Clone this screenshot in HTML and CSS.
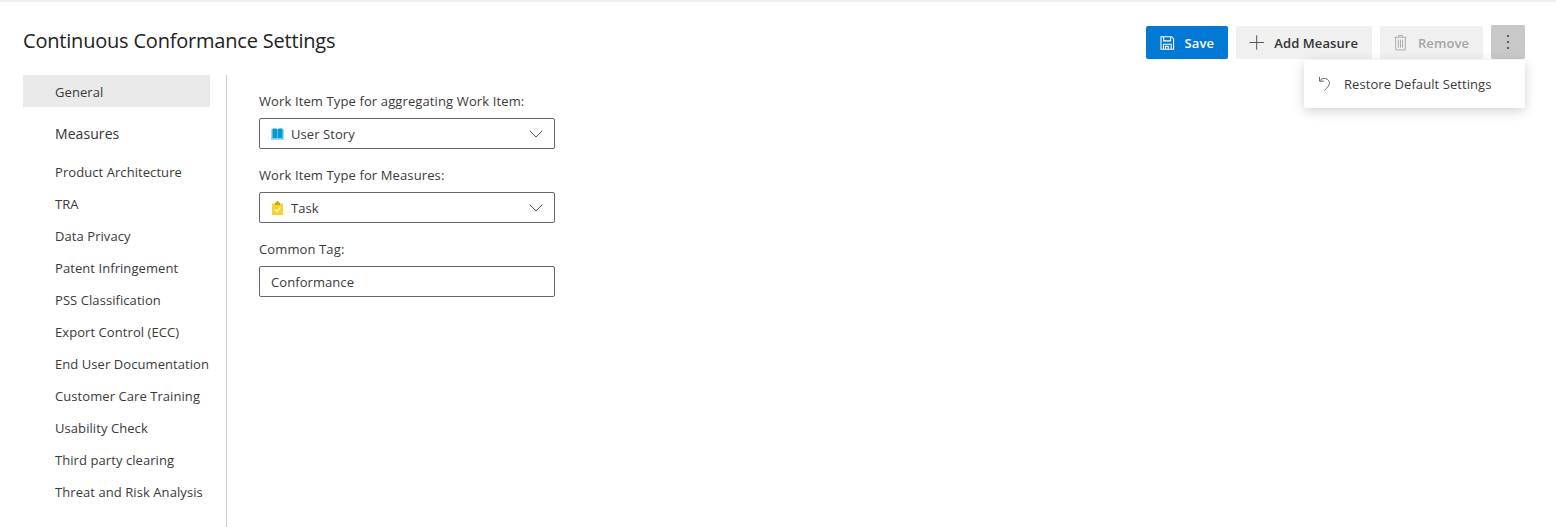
FILE: index.html
```html
<!DOCTYPE html>
<html lang="en">
<head>
<meta charset="utf-8" />
<title>Continuous Conformance Settings</title>
<link rel="stylesheet" href="styles.css">
</head>
<body>
<div id="page">
  <div id="header">
    <h1>Continuous Conformance Settings</h1>
    <div id="toolbar">
      <a class="btn primary">
        <svg width="16" height="16" viewBox="0 0 16 16" fill="none" stroke="#fff" stroke-width="1.2"><path d="M1.1 1.1h11.6l2.2 2.2v11.6H1.1z"/><path d="M4 1.3v4.4h7.6V1.3M3.8 14.700V9.300h8.400v5.400M6 14.700v-3h3v3"/></svg>
        <span>Save</span>
      </a>
      <a class="btn add">
        <svg width="17" height="17" viewBox="0 0 17 17" stroke="#555" stroke-width="1.1"><path d="M8.500 0.500v16M0.500 8.500h16"/></svg>
        <span>Add Measure</span>
      </a>
      <a class="btn disabled">
        <svg width="14" height="17" viewBox="0 0 14 17" fill="none" stroke="#a8a8a8" stroke-width="1"><path d="M0.500 2.800h13M5 2.600V0.800h4v1.800M1.800 2.800v13.700h10.400V2.800M4.800 5.500v8.500M7 5.500v8.500M9.200 5.500v8.500"/></svg>
        <span>Remove</span>
      </a>
      <a class="btn more">
        <svg width="4" height="16" viewBox="0 0 4 16" fill="#444"><circle cx="2" cy="2" r="1.1"/><circle cx="2" cy="8" r="1.1"/><circle cx="2" cy="14" r="1.1"/></svg>
      </a>
      <div id="menu">
        <svg width="14" height="16" viewBox="0 0 14 16" fill="none" stroke="#666" stroke-width="1"><path d="M1.500 0.800v4.400h4.400"/><path d="M1.700 5C3.200 2.900 5.300 2 7.600 2.500c2.500.6 4 2.700 3.800 5-.2 2-1.900 3.900-5 7"/></svg>
        <span>Restore Default Settings</span>
      </div>
    </div>
  </div>
  <div id="content">
    <ul id="nav">
      <li class="selected">General</li>
      <li class="group">Measures</li>
      <li>Product Architecture</li>
      <li>TRA</li>
      <li>Data Privacy</li>
      <li>Patent Infringement</li>
      <li>PSS Classification</li>
      <li>Export Control (ECC)</li>
      <li>End User Documentation</li>
      <li>Customer Care Training</li>
      <li>Usability Check</li>
      <li>Third party clearing</li>
      <li>Threat and Risk Analysis</li>
    </ul>
    <div id="form">
      <label>Work Item Type for aggregating Work Item:</label>
      <div class="field">
        <svg width="13" height="12" viewBox="0 0 13 12"><path fill="#9ad8f0" d="M0 1.500h13V12H0z"/><path fill="#009ccc" d="M1.500 0.500h3.400q1.300 0 1.300 1v8.700H1.500zM11.500 0.500H8.100q-1.300 0-1.300 1v8.700h4.700z"/></svg>
        <span>User Story</span>
        <svg class="chevron" width="14" height="8" viewBox="0 0 14 8" fill="none" stroke="#555" stroke-width="1"><path d="M0.700 0.700L7 7l6.300-6.300"/></svg>
      </div>
      <label>Work Item Type for Measures:</label>
      <div class="field">
        <svg width="13" height="14" viewBox="0 0 13 14"><path fill="#f6d32d" d="M1 2.500h11V14H1z"/><path fill="#c9a400" d="M4 1.500h1.700V0h1.600v1.500H9V4H4z"/><path fill="none" stroke="#fff" stroke-width="1.200" d="M3.800 8.500l2 2 3.500-3.800"/></svg>
        <span>Task</span>
        <svg class="chevron" width="14" height="8" viewBox="0 0 14 8" fill="none" stroke="#555" stroke-width="1"><path d="M0.700 0.700L7 7l6.300-6.300"/></svg>
      </div>
      <label>Common Tag:</label>
      <div class="field text"><span>Conformance</span></div>
    </div>
  </div>
</div>
</body>
</html>
```

FILE: styles.css
```css
html, body {
    margin: 0;
    height: 100%;
    background: #fff;
}
body {
    font-family: "Open Sans", "Noto Sans", sans-serif;
    font-size: 13px;
    letter-spacing: 0.07px;
    color: #3a3a3a;
    overflow: hidden;
}
#page {
    display: flex;
    flex-direction: column;
    height: 100%;
    box-sizing: border-box;
    border-top: 2px solid #eee;
}
#header {
    display: flex;
    justify-content: space-between;
    align-items: flex-start;
    padding: 23px 31px 0 23px;
    height: 50px;
    flex: none;
}
h1 {
    font-size: 20px;
    font-weight: 400;
    line-height: 32px;
    margin: 0;
    color: #222;
    letter-spacing: -0.2px;
}
#toolbar {
    display: flex;
    gap: 8px;
    position: relative;
}
.btn {
    display: flex;
    align-items: center;
    gap: 10px;
    height: 33px;
    margin-top: 1px;
    padding: 0 14px;
    box-sizing: border-box;
    background: #f0f0f0;
    border-radius: 2px;
    font-weight: 600;
    color: #333;
    white-space: nowrap;
}
.btn.primary {
    width: 82px;
    background: #0078d4;
    color: #fff;
}
.btn.add {
    width: 136px;
    padding-left: 13px;
}
.btn.disabled {
    width: 103px;
    gap: 11px;
    color: #a6a6a6;
}
.btn.more {
    width: 34px;
    height: 34px;
    margin-top: 0;
    justify-content: center;
    padding: 0;
    background: #c8c8c8;
}
#menu {
    position: absolute;
    top: 35px;
    right: 0;
    width: 221px;
    height: 48px;
    box-sizing: border-box;
    padding: 0 14px;
    display: flex;
    align-items: center;
    gap: 12px;
    background: #fff;
    border-radius: 2px;
    box-shadow: 0 3px 12px rgba(0,0,0,0.18);
    white-space: nowrap;
}
#content {
    display: flex;
    flex: 1;
    padding-left: 23px;
    min-height: 0;
}
#nav {
    list-style: none;
    margin: 0;
    padding: 0 16px 0 0;
    width: 187px;
    border-right: 1px solid #ccc;
    flex: none;
}
#nav li {
    height: 32px;
    line-height: 32px;
    padding-left: 32px;
    white-space: nowrap;
}
#nav li.selected {
    line-height: 34px;
    background: #eaeaea;
    margin-bottom: 10px;
}
#nav li.group {
    line-height: 34px;
    font-size: 14px;
    font-weight: 500;
    color: #333;
    margin-bottom: 7px;
}
#form {
    padding: 16px 0 0 32px;
    width: 296px;
}
#form label {
    display: block;
    line-height: 20px;
    margin-bottom: 7px;
    letter-spacing: 0.12px;
    white-space: nowrap;
}
.field {
    display: flex;
    align-items: center;
    gap: 7px;
    height: 31px;
    box-sizing: border-box;
    margin-bottom: 16px;
    padding: 0 11px;
    border: 1px solid #666;
    border-radius: 2px;
}
.field .chevron {
    margin-left: auto;
}
```
